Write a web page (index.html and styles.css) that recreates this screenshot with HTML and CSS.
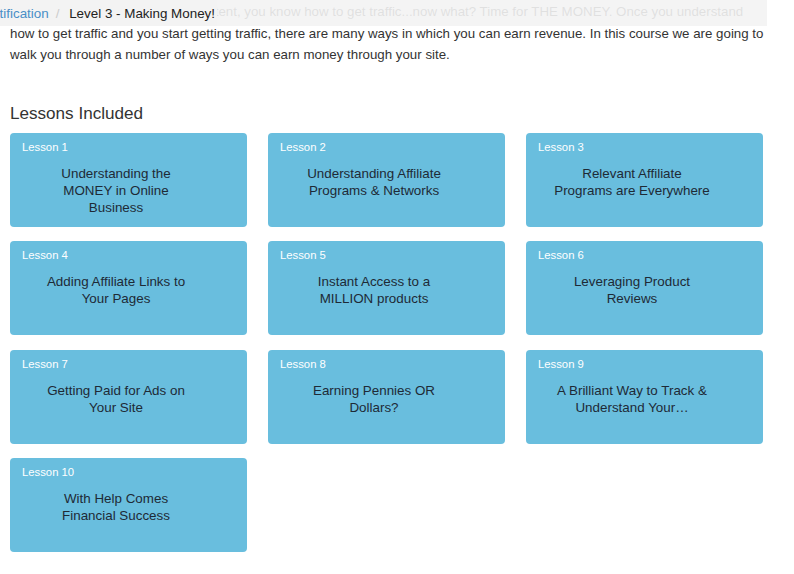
FILE: index.html
```html
<!DOCTYPE html>
<html>
<head>
<meta charset="utf-8">
<link rel="stylesheet" href="styles.css">
</head>
<body>
<div class="page">
  <nav class="crumbbar">
    <ol class="breadcrumb">
      <li><a href="#">Certification</a></li>
      <li class="active">Level 3 - Making Money!</li>
    </ol>
  </nav>
  <p class="intro"><span class="lead-in">Now you have a site and great content, you know how to get traffic...now what? Time for THE MONEY. Once you understand</span>how to get traffic and you start getting traffic, there are many ways in which you can earn revenue. In this course we are going to walk you through a number of ways you can earn money through your site.</p>

  <h3 class="section-title">Lessons Included</h3>
  <div class="lessons">
    <div class="lesson"><div class="label">Lesson 1</div><div class="title">Understanding the MONEY in Online Business</div></div>
    <div class="lesson"><div class="label">Lesson 2</div><div class="title">Understanding Affiliate Programs &amp; Networks</div></div>
    <div class="lesson"><div class="label">Lesson 3</div><div class="title">Relevant Affiliate Programs are Everywhere</div></div>
    <div class="lesson"><div class="label">Lesson 4</div><div class="title">Adding Affiliate Links to Your Pages</div></div>
    <div class="lesson"><div class="label">Lesson 5</div><div class="title">Instant Access to a MILLION products</div></div>
    <div class="lesson"><div class="label">Lesson 6</div><div class="title">Leveraging Product Reviews</div></div>
    <div class="lesson"><div class="label">Lesson 7</div><div class="title">Getting Paid for Ads on Your Site</div></div>
    <div class="lesson"><div class="label">Lesson 8</div><div class="title">Earning Pennies OR Dollars?</div></div>
    <div class="lesson"><div class="label">Lesson 9</div><div class="title">A Brilliant Way to Track &amp; Understand Your…</div></div>
    <div class="lesson"><div class="label">Lesson 10</div><div class="title">With Help Comes Financial Success</div></div>
  </div>
</div>
</body>
</html>
```

FILE: styles.css
```css
* { box-sizing: border-box; }
html, body { margin: 0; padding: 0; background: #fff; }
body {
  font-family: "Liberation Sans", Arial, sans-serif;
  color: #333;
  overflow: hidden;
}
.page {
  position: relative;
  padding: 1px 0 0 10px;
}
.crumbbar {
  position: absolute;
  top: 0;
  left: 0;
  width: 767px;
  height: 26px;
  background: rgba(243, 243, 243, 0.9);
  overflow: hidden;
}
.breadcrumb {
  list-style: none;
  margin: 0 0 0 -22px;
  padding: 0 2px 0 0;
  height: 26px;
  display: inline-flex;
  align-items: center;
  background: #f3f3f3;
  font-size: 13.4px;
}
.breadcrumb li + li::before {
  content: "/\00a0";
  padding: 0 6px 0 7px;
  color: #ccc;
}
.breadcrumb a {
  color: #4a8fc7;
  text-decoration: none;
}
.breadcrumb .active { color: #222; }
.intro {
  margin: 0;
  width: 764px;
  font-size: 13.3px;
  line-height: 21.6px;
  color: #333;
}
.lead-in {
  display: block;
  white-space: nowrap;
}
.section-title {
  margin: 38px 0 9px;
  font-size: 17.1px;
  font-weight: normal;
  line-height: 20px;
  color: #333;
}
.lessons {
  display: grid;
  grid-template-columns: repeat(3, 237px);
  column-gap: 21px;
  row-gap: 14.5px;
}
.lesson {
  height: 94px;
  background: #69bede;
  border-radius: 4px;
  padding: 7px 12px;
}
.label {
  color: #fff;
  font-size: 11.3px;
  line-height: 14px;
}
.title {
  width: 156px;
  margin: 11px 0 0 16px;
  text-align: center;
  font-size: 13.4px;
  line-height: 17px;
  color: #1e2a36;
}
```
